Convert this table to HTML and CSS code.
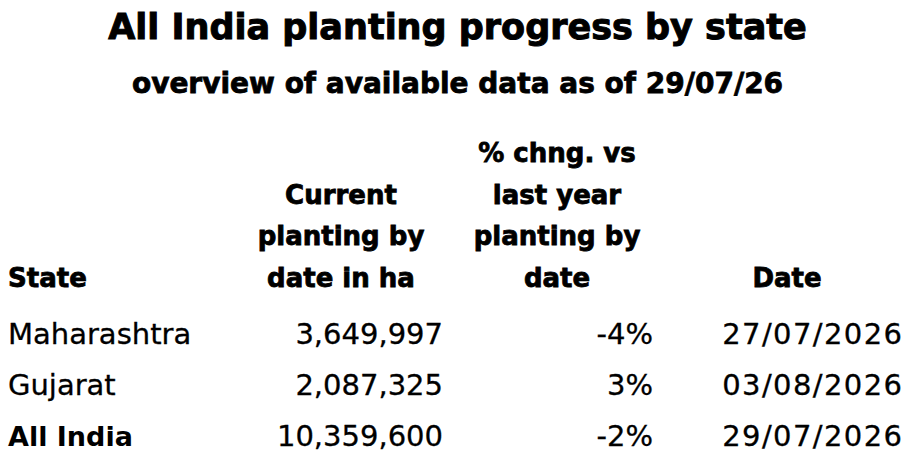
FILE: index.html
```html
<!DOCTYPE html>
<html lang="en">
<head>
<meta charset="utf-8">
<title>All India planting progress by state</title>
<link rel="stylesheet" href="styles.css">
</head>
<body>
<div class="page">
  <h1 class="title">All India planting progress by state</h1>
  <h2 class="subtitle">overview of available data as of 29/07/26</h2>
  <div class="table">
    <div class="cell head c1">State</div>
    <div class="cell head c2">Current<br>planting by<br>date in ha</div>
    <div class="cell head c3">% chng. vs<br>last year<br>planting by<br>date</div>
    <div class="cell head c4">Date</div>

    <div class="cell row c1">Maharashtra</div>
    <div class="cell row c2 num">3,649,997</div>
    <div class="cell row c3 num">-4%</div>
    <div class="cell row c4 num date">27/07/2026</div>

    <div class="cell row c1">Gujarat</div>
    <div class="cell row c2 num">2,087,325</div>
    <div class="cell row c3 num">3%</div>
    <div class="cell row c4 num date">03/08/2026</div>

    <div class="cell row c1 total">All India</div>
    <div class="cell row c2 num">10,359,600</div>
    <div class="cell row c3 num">-2%</div>
    <div class="cell row c4 num date">29/07/2026</div>
  </div>
</div>
</body>
</html>
```
FILE: styles.css
```css
html, body {
  margin: 0;
  padding: 0;
  background: #ffffff;
}
body {
  width: 915px;
  height: 463px;
  overflow: hidden;
  color: #000000;
  font-family: "DejaVu Sans", sans-serif;
}
.page {
  display: flex;
  flex-direction: column;
  align-items: center;
  padding-top: 5px;
}
.title {
  margin: 0;
  font-size: 35px;
  line-height: 44px;
  font-weight: 700;
  -webkit-text-stroke: 1px #000000;
}
.subtitle {
  margin: 17px 0 0 0;
  font-size: 28px;
  line-height: 36px;
  font-weight: 700;
  -webkit-text-stroke: 0.8px #000000;
}
.table {
  align-self: flex-start;
  margin: 31px 0 0 8px;
  display: grid;
  grid-template-columns: 231px 204px 210px 249px;
}
.cell.head {
  font-size: 26px;
  line-height: 41.5px;
  font-weight: 700;
  align-self: end;
  text-align: center;
  margin-bottom: 10px;
  -webkit-text-stroke: 0.8px #000000;
}
.cell.head.c1 {
  text-align: left;
}
.c3 {
  padding-left: 18px;
}
.c4 {
  padding-left: 19px;
}
.cell.row {
  font-size: 29px;
  line-height: 51px;
  font-weight: 400;
  white-space: nowrap;
  -webkit-text-stroke: 0.3px #000000;
}
.num {
  text-align: right;
}
.date {
  letter-spacing: 1.4px;
  margin-right: -1.4px;
}
.cell.row.total {
  font-weight: 700;
  font-size: 27px;
  -webkit-text-stroke: 0;
}
```
